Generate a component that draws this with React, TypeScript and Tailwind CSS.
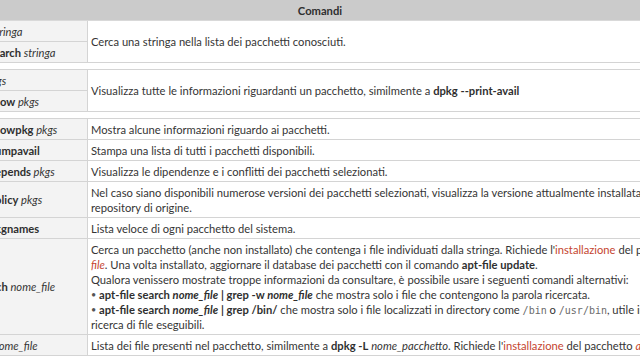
import React from "react";

const RED = "text-[#c5452f]";
const MONO = { fontFamily: "'DejaVu Sans Mono', monospace" };

function Cmd({ c, a }: { c: string; a?: string }) {
  return (
    <span className="whitespace-nowrap">
      <b className="font-bold text-[#2f2f2f]">{c}</b>
      {a ? <i className="italic"> {a}</i> : null}
    </span>
  );
}

function Row({
  left,
  children,
  tall = false,
}: {
  left: React.ReactNode;
  children: React.ReactNode;
  tall?: boolean;
}) {
  return (
    <div className="flex border-b border-[#d4d4d4]">
      <div
        className={`w-[158px] shrink-0 bg-[#f3f3f3] border-r border-[#d4d4d4] pl-[7px] py-[2.5px] flex ${
          tall ? "items-center" : "items-start"
        }`}
      >
        {left}
      </div>
      <div className="flex-1 pl-[3px] pr-[4px] py-[2.5px] whitespace-nowrap">{children}</div>
    </div>
  );
}

function Split({
  top,
  bottom,
  children,
}: {
  top: React.ReactNode;
  bottom: React.ReactNode;
  children: React.ReactNode;
}) {
  return (
    <div className="flex border-b border-[#d4d4d4]">
      <div className="w-[158px] shrink-0 bg-[#f3f3f3] border-r border-[#d4d4d4] flex flex-col">
        <div className="pl-[7px] py-[2.5px] border-b border-[#d4d4d4]">{top}</div>
        <div className="pl-[7px] py-[2.5px]">{bottom}</div>
      </div>
      <div className="flex-1 pl-[3px] pr-[4px] flex items-center whitespace-nowrap">{children}</div>
    </div>
  );
}

function Spacer() {
  return <div className="h-[7px] bg-white border-b border-[#d4d4d4]" />;
}

function Bullet() {
  return <span className="font-normal text-[#555555] text-[9px] leading-[0] align-[1px]">•</span>;
}

function Code({ children }: { children: React.ReactNode }) {
  return (
    <code className="text-[#6a6a6a] text-[10px] leading-[0]" style={MONO}>
      {children}
    </code>
  );
}

export default function App() {
  return (
    <div
      className="w-[640px] h-[360px] overflow-hidden bg-white text-[#353535] text-[11.2px] leading-[15px]"
      style={{ fontFamily: "Lato, 'Noto Sans', sans-serif" }}
    >
      <div className="ml-[-70px] w-[780px]">
        <div className="h-[21px] bg-[#cbcbcb] border-b border-[#d9d9d9] flex items-center justify-center font-bold text-[#2f2f2f]">
          Comandi
        </div>

        <Split
          top={<Cmd c="apt search" a="stringa" />}
          bottom={<Cmd c="apt-cache search" a="stringa" />}
        >
          Cerca una stringa nella lista dei pacchetti conosciuti.
        </Split>
        <Spacer />
        <Split
          top={<Cmd c="apt show" a="pkgs" />}
          bottom={<Cmd c="apt-cache show" a="pkgs" />}
        >
          <span>
            Visualizza tutte le informazioni riguardanti un pacchetto, similmente a{" "}
            <b className="font-bold text-[#2f2f2f]">dpkg --print-avail</b>
          </span>
        </Split>
        <Spacer />

        <Row left={<Cmd c="apt-cache showpkg" a="pkgs" />}>
          Mostra alcune informazioni riguardo ai pacchetti.
        </Row>
        <Row left={<Cmd c="apt-cache dumpavail" />}>
          Stampa una lista di tutti i pacchetti disponibili.
        </Row>
        <Row left={<Cmd c="apt-cache depends" a="pkgs" />}>
          Visualizza le dipendenze e i conflitti dei pacchetti selezionati.
        </Row>
        <Row tall left={<Cmd c="apt-cache policy" a="pkgs" />}>
          Nel caso siano disponibili numerose versioni dei pacchetti selezionati, visualizza la
          versione attualmente installata e il
          <br />
          repository di origine.
        </Row>
        <Row left={<Cmd c="apt-cache pkgnames" />}>
          Lista veloce di ogni pacchetto del sistema.
        </Row>
        <Row tall left={<Cmd c="apt-file search" a="nome_file" />}>
          <div>
            Cerca un pacchetto (anche non installato) che contenga i file individuati dalla
            stringa. Richiede l'<span className={RED}>installazione</span> del pacchetto{" "}
            <i className={`italic ${RED}`}>apt-</i>
            <br />
            <i className={`italic ${RED}`}>file</i>. Una volta installato, aggiornare il database
            dei pacchetti con il comando <b className="font-bold text-[#2f2f2f]">apt-file update</b>.
            <br />
            Qualora venissero mostrate troppe informazioni da consultare, è possibile usare i
            seguenti comandi alternativi:
            <br />
            <Bullet />{" "}
            <b className="font-bold text-[#2f2f2f]">
              apt-file search <i className="italic">nome_file</i> | grep -w{" "}
              <i className="italic">nome_file</i>
            </b>{" "}
            che mostra solo i file che contengono la parola ricercata.
            <br />
            <Bullet />{" "}
            <b className="font-bold text-[#2f2f2f]">
              apt-file search <i className="italic">nome_file</i> | grep /bin/
            </b>{" "}
            che mostra solo i file localizzati in directory come <Code>/bin</Code> o{" "}
            <Code>/usr/bin</Code>, utile in caso di
            <br />
            ricerca di file eseguibili.
          </div>
        </Row>
        <Row left={<Cmd c="apt-file list" a="nome_file" />}>
          Lista dei file presenti nel pacchetto, similmente a{" "}
          <b className="font-bold text-[#2f2f2f]">dpkg -L</b>{" "}
          <i className="italic">nome_pacchetto</i>. Richiede l'
          <span className={RED}>installazione</span> del pacchetto{" "}
          <i className={`italic ${RED}`}>apt-file</i>.
        </Row>
      </div>
    </div>
  );
}
